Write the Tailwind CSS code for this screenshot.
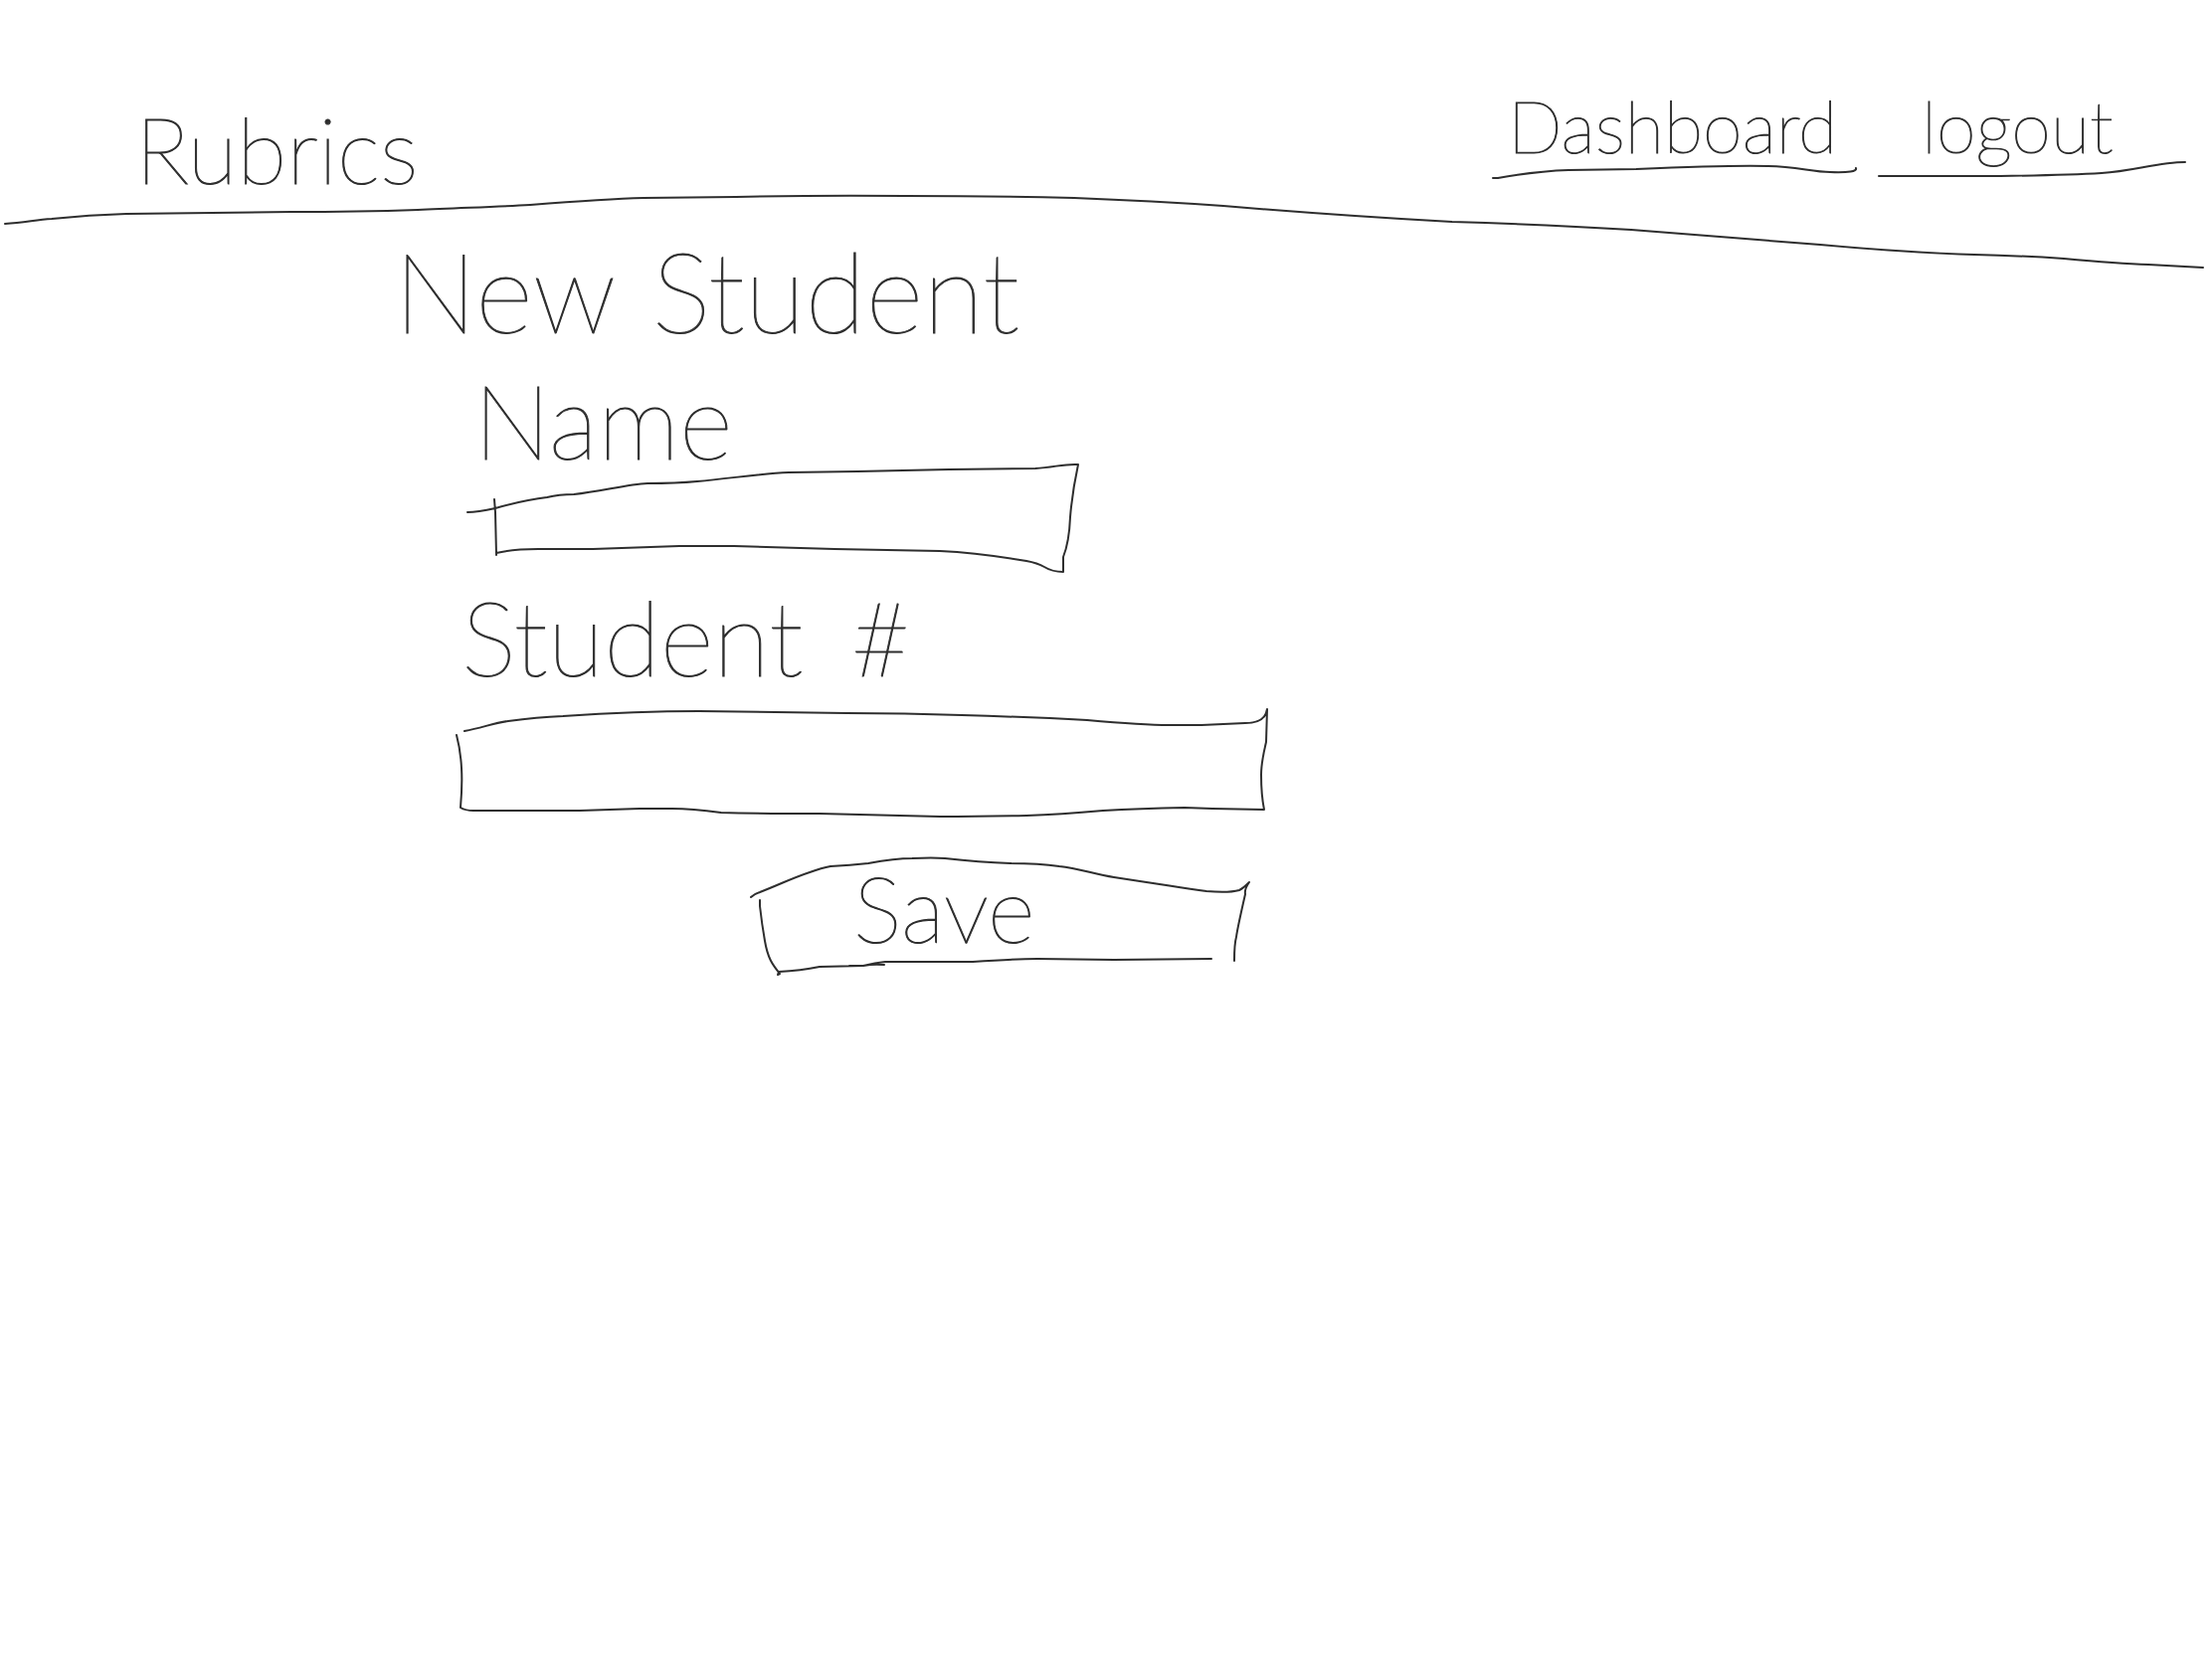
<!DOCTYPE html>
<html lang="en">
<head>
<meta charset="utf-8">
<meta name="viewport" content="width=device-width, initial-scale=1">
<title>Rubrics - New Student</title>
<script src="https://cdn.jsdelivr.net/npm/@tailwindcss/browser@4"></script>
</head>
<body class="min-h-screen bg-white font-['Lato',sans-serif] font-thin text-[#2e2e2e] [-webkit-text-stroke:1px_#2e2e2e]">

<header>
  <div class="flex items-start justify-between pt-[90px] pr-6 pl-[136px]">
    <div class="mt-5 pb-1 text-[92px] leading-[80px]">Rubrics</div>
    <nav class="flex gap-5 text-[72px] leading-[72px]">
      <a href="#dashboard" class="block w-[368px]">
        <span class="block pl-4">Dashboard</span>
        <svg class="block h-5 w-full overflow-visible fill-none stroke-[#2e2e2e] stroke-2" viewBox="1500 162 368 20" preserveAspectRatio="none" stroke-linecap="round" stroke-linejoin="round" aria-hidden="true">
          <path d="M1501 179l5 0Q1545 172 1577 171L1645 170Q1740 166 1777 167C1805 167 1822 173 1840 173Q1868 174 1866 169"/>
        </svg>
      </a>
      <a href="#logout" class="block w-[312px]">
        <span class="block pl-11">logout</span>
        <svg class="block h-5 w-full overflow-visible fill-none stroke-[#2e2e2e] stroke-2" viewBox="1888 162 312 20" preserveAspectRatio="none" stroke-linecap="round" stroke-linejoin="round" aria-hidden="true">
          <path d="M1889 177L2011 177Q2080 176 2113 174C2145 172 2170 163 2197 163"/>
        </svg>
      </a>
    </nav>
  </div>
  <!-- sketched rule under the header -->
  <svg class="block h-[78px] w-full overflow-visible fill-none stroke-[#2e2e2e] stroke-2" viewBox="0 194 2224 78" preserveAspectRatio="none" stroke-linecap="round" stroke-linejoin="round" aria-hidden="true">
    <path d="M5 225C25 224 35 221 52 220Q90 216 127 215L293 213Q360 213 420 211C460 209 500 208 533 206Q610 200 647 199L740 198Q830 196 910 197Q1000 197 1080 199Q1160 202 1230 207Q1350 217 1460 223Q1560 226 1640 231L1830 246Q1920 254 1985 256Q2030 257 2075 260Q2130 265 2160 266L2215 269"/>
  </svg>
</header>

<main class="-mt-6">
  <h1 class="ml-[396px] flex gap-9 text-[112px] leading-[88px]"><span>New</span> <span>Student</span></h1>

  <form class="mt-[42px] ml-[456px] flex max-w-[820px] flex-col">
    <div class="ml-3 max-w-[618px]">
      <label for="name" class="block pl-2 text-[104px] leading-[88px]">Name</label>
      <div class="relative h-[110px]">
        <svg class="absolute inset-0 size-full overflow-visible fill-none stroke-[#2e2e2e] stroke-2" viewBox="468 466 618 110" preserveAspectRatio="none" stroke-linecap="round" stroke-linejoin="round" aria-hidden="true">
          <path d="M470 515Q480 515 498 511Q530 502 550 500Q562 497 577 497C605 494 630 487 651 486Q680 486 701 484C735 481 765 476 793 475L862 474L954 472L1041 471C1060 470 1070 466 1084 467Q1078 495 1076 520Q1075 545 1069 560L1069 575Q1058 575 1050 570Q1043 566 1032 564Q985 556 945 554Q890 553 839 552L738 549L683 549L596 552L541 552Q515 552 499 556M497 502L498 515L499 558"/>
        </svg>
        <input id="name" name="name" type="text" class="relative size-full bg-transparent px-12 pt-2 text-[48px] outline-none">
      </div>
    </div>

    <div class="mt-5">
      <label for="student-number" class="flex gap-12 pb-7 pl-2 text-[104px] leading-[88px]"><span>Student</span> <span>#</span></label>
      <div class="relative h-[110px]">
        <svg class="absolute inset-0 size-full overflow-visible fill-none stroke-[#2e2e2e] stroke-2" viewBox="456 713 820 110" preserveAspectRatio="none" stroke-linecap="round" stroke-linejoin="round" aria-hidden="true">
          <path d="M467 736C485 733 495 728 511 726Q540 722 566 721Q640 716 703 716L851 718Q910 718 967 720Q1035 722 1093 725Q1150 730 1175 730L1208 730L1252 728Q1272 728 1274 714L1273 747Q1268 768 1268 780Q1268 800 1271 815L1219 814L1191 813Q1145 814 1109 816Q1065 820 1032 821Q985 822 945 822L824 819Q760 819 725 818Q695 814 676 814L643 814L583 816L476 816Q468 816 463 813Q465 790 464 773Q463 755 459 740"/>
        </svg>
        <input id="student-number" name="student-number" type="text" class="relative size-full bg-transparent px-8 text-[48px] outline-none">
      </div>
    </div>

    <button type="submit" class="relative mt-10 mr-5 h-[118px] w-[504px] self-end pb-4 pl-[106px] text-left text-[92px] leading-[88px]">
      <svg class="absolute inset-0 size-full overflow-visible fill-none stroke-[#2e2e2e] stroke-2" viewBox="752 863 504 118" preserveAspectRatio="none" stroke-linecap="round" stroke-linejoin="round" aria-hidden="true">
        <path d="M755 903Q758 900 764 898C790 888 810 877 835 872Q855 871 873 869Q900 864 917 864Q938 863 950 864Q985 868 1016 869Q1045 869 1065 872C1085 874 1100 880 1120 883Q1185 893 1213 897Q1235 899 1246 896Q1250 894 1256 888Q1251 895 1252 900Q1244 935 1243 943Q1241 950 1241 967M764 906L764 912Q766 930 769 947C772 965 777 971 784 980L782 981L783 978Q805 977 824 973L868 972Q880 969 890 968L978 968Q1020 965 1043 965L1120 966L1218 965M854 972L868 972Q878 970 889 971"/>
      </svg>
      Save
    </button>
  </form>
</main>

</body>
</html>
